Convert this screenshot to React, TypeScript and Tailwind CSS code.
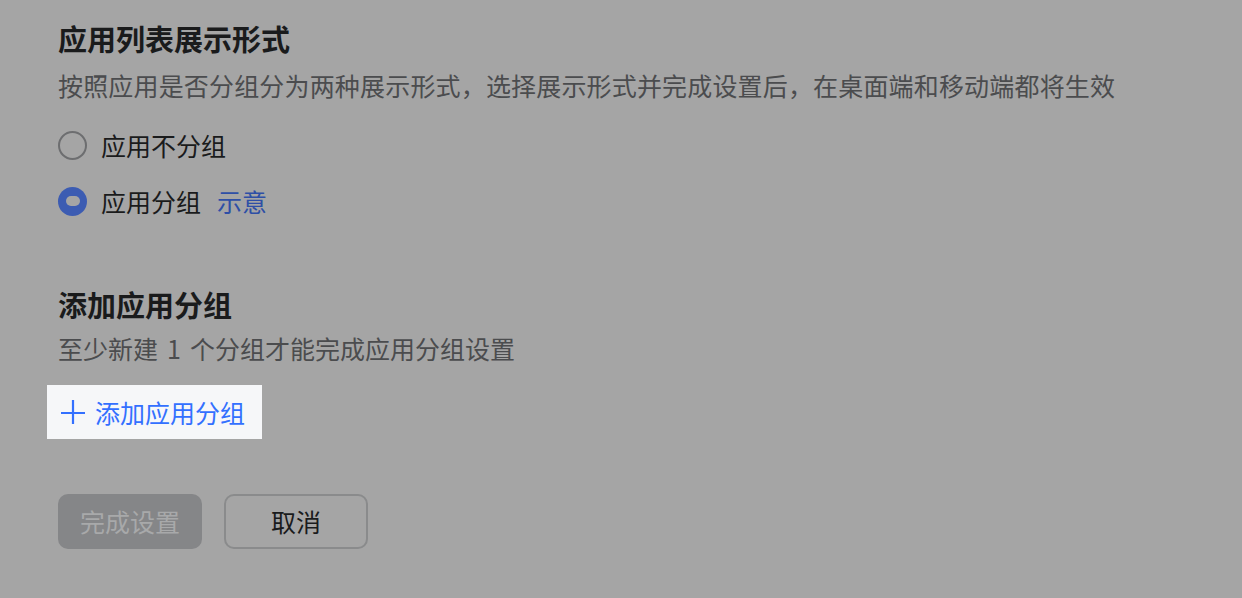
import React from "react";

const font = { fontFamily: '"Noto Sans CJK SC", "Noto Sans", sans-serif' };

function Radio({ checked }: { checked: boolean }) {
  if (checked) {
    return (
      <span className="flex h-[29px] w-[29px] shrink-0 items-center justify-center rounded-full bg-[#3c5cb2]">
        <span className="h-[10px] w-[14px] rounded-[5px] bg-[#a5a5a5]" />
      </span>
    );
  }
  return <span className="h-[29px] w-[29px] shrink-0 rounded-full border-[2px] border-[#6d6e70]" />;
}

export default function App() {
  return (
    <div className="min-h-[598px] w-full bg-[#a5a5a5] pl-[58px] pt-[18px]" style={font}>
      <div className="text-[29px] font-bold leading-[40px] text-[#1a1b1c]">应用列表展示形式</div>
      <div className="mt-[9px] text-[25px] leading-[36px] tracking-[0.17px] text-[#4b4c4e]">
        按照应用是否分组分为两种展示形式，选择展示形式并完成设置后，在桌面端和移动端都将生效
      </div>

      <div className="mt-[24px] flex h-[36px] items-center gap-[14px]">
        <Radio checked={false} />
        <span className="text-[25px] leading-[36px] text-[#1a1b1c]">应用不分组</span>
      </div>
      <div className="mt-[20px] flex h-[36px] items-center gap-[14px]">
        <Radio checked={true} />
        <span className="text-[25px] leading-[36px] text-[#1a1b1c]">应用分组</span>
        <span className="ml-[2px] text-[25px] leading-[36px] text-[#2e4fa6]">示意</span>
      </div>

      <div className="mt-[65px] text-[29px] font-bold leading-[40px] text-[#1a1b1c]">添加应用分组</div>
      <div className="mt-[6px] text-[25px] leading-[36px] text-[#4b4c4e]">
        至少新建<span className="mx-[9px]">1</span>个分组才能完成应用分组设置
      </div>

      <div className="ml-[-11px] mt-[19px] flex h-[54px] w-[215px] items-center gap-[10px] bg-[#f6f7f9] pl-[14px]">
        <svg width="24" height="24" viewBox="0 0 24 24" className="shrink-0">
          <path d="M12 0V24M0 13H24" stroke="#3370ff" strokeWidth="2.2" fill="none" />
        </svg>
        <span className="text-[25px] leading-[36px] text-[#3370ff]">添加应用分组</span>
      </div>

      <div className="mt-[55px] flex gap-[22px]">
        <div className="flex h-[55px] w-[144px] items-center justify-center rounded-[10px] bg-[#858688] text-[25px] text-[#a8a9aa]">
          完成设置
        </div>
        <div className="flex h-[55px] w-[144px] items-center justify-center rounded-[10px] border-[2px] border-[#8a8b8c] text-[25px] text-[#1a1b1c]">
          取消
        </div>
      </div>
    </div>
  );
}
